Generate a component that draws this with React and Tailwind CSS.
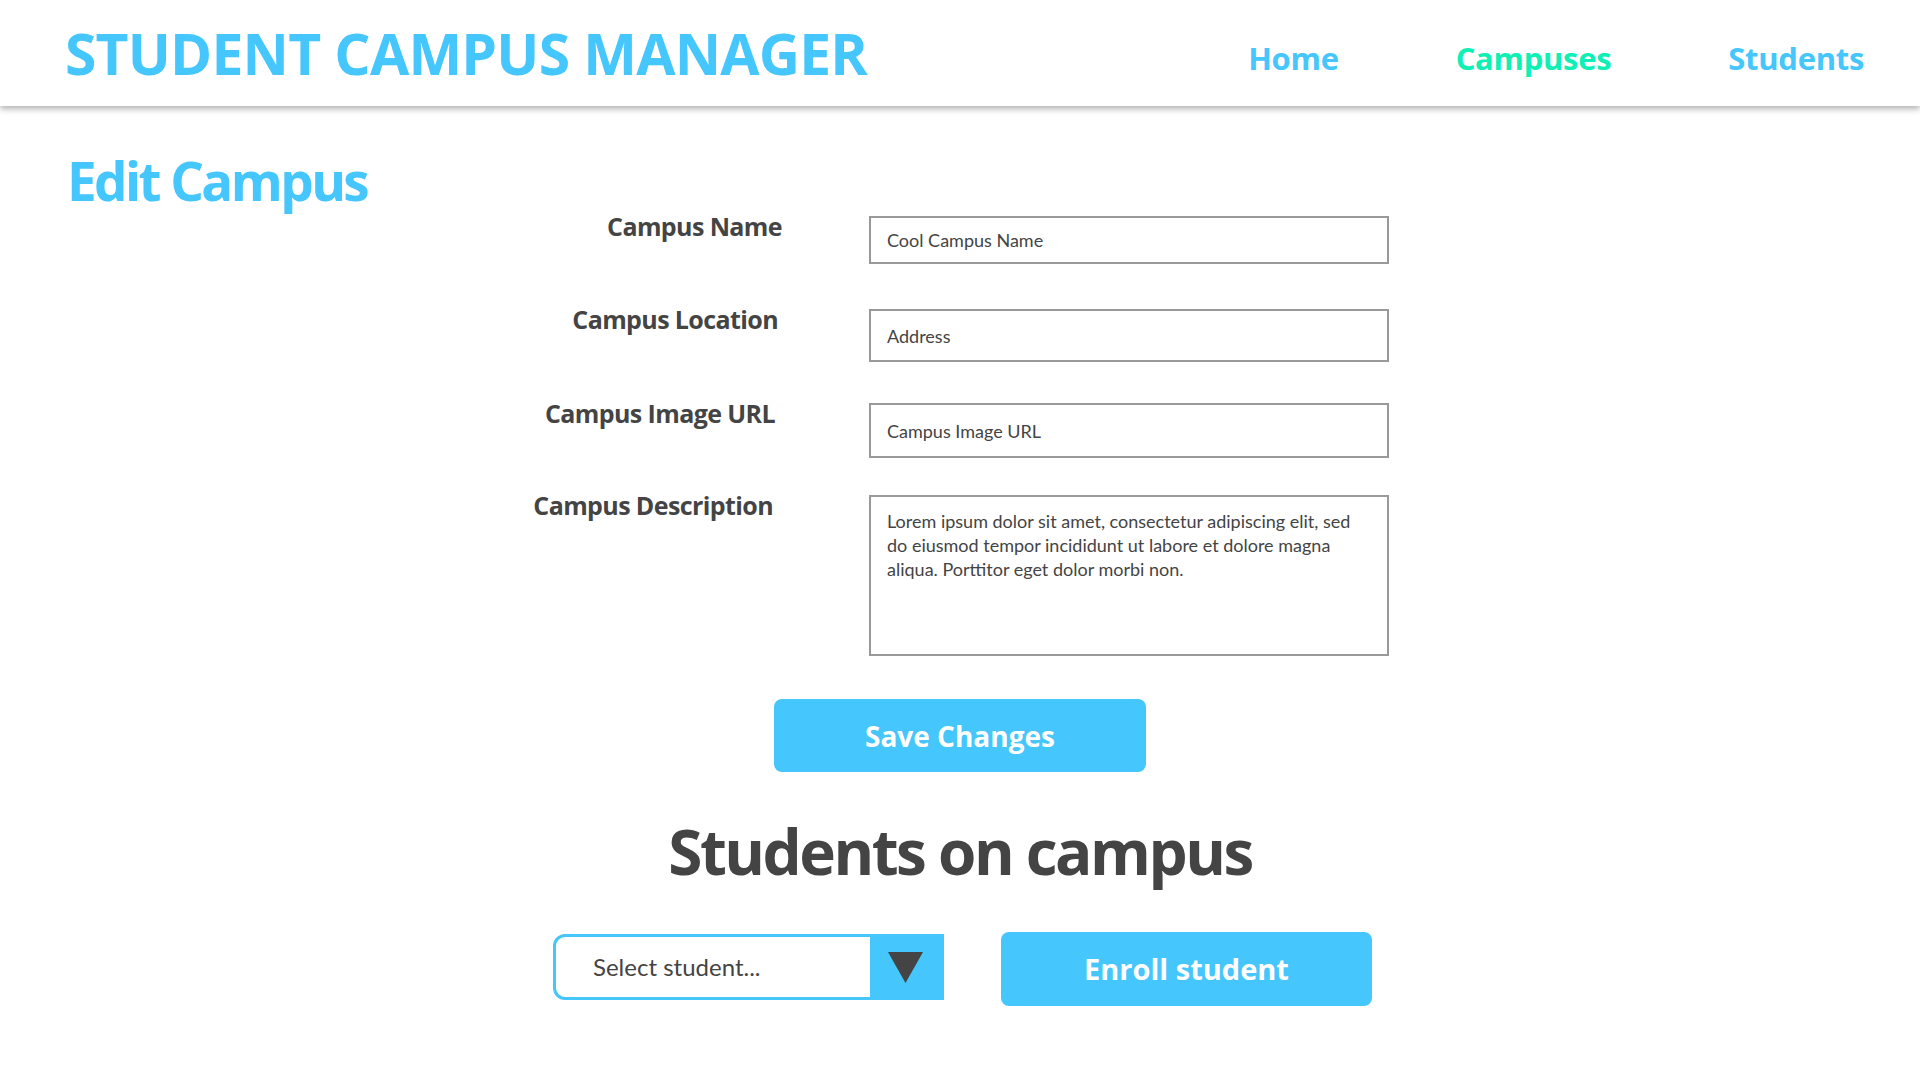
import { useState } from 'react'

const rows = [
  { label: 'Campus Name', placeholder: 'Cool Campus Name', h: 'h-[48px]', mt: 'mt-0', pr: 'pr-0' },
  { label: 'Campus Location', placeholder: 'Address', h: 'h-[53px]', mt: 'mt-[45px]', pr: 'pr-[4px]' },
  { label: 'Campus Image URL', placeholder: 'Campus Image URL', h: 'h-[55px]', mt: 'mt-[41px]', pr: 'pr-[7px]' },
]

function Header() {
  return (
    <header className="relative z-10 h-[106px] bg-white flex items-center justify-between pl-[65px] pr-[56px] shadow-[0_3px_6px_rgba(0,0,0,0.3)]">
      <h1 className="text-[57px] leading-none font-bold text-[#45c6fc] tracking-[-0.8px]">STUDENT CAMPUS MANAGER</h1>
      <nav className="flex items-center gap-[117px] text-[31px] font-bold leading-none pt-[10px] tracking-[-0.3px]">
        <a className="text-[#45c6fc]">Home</a>
        <a className="text-[#0ff0b4]">Campuses</a>
        <a className="text-[#45c6fc]">Students</a>
      </nav>
    </header>
  )
}

function App() {
  const [desc, setDesc] = useState(
    'Lorem ipsum dolor sit amet, consectetur adipiscing elit, sed do eiusmod tempor incididunt ut labore et dolore magna aliqua. Porttitor eget dolor morbi non.'
  )

  return (
    <div className="min-h-screen bg-white text-[#444444]" style={{ fontFamily: '"Open Sans", sans-serif' }}>
      <Header />

      <main className="pt-[48px]">
        <h2 className="ml-[67px] text-[53px] leading-none font-bold text-[#45c6fc] tracking-[-2.6px]">Edit Campus</h2>

        <form className="mt-[9px]" onSubmit={(e) => e.preventDefault()}>
          <div className="ml-[382px]">
            {rows.map(row => (
              <div key={row.label} className={`flex items-start ${row.mt}`}>
                <label className={`w-[400px] text-right text-[25px] leading-[20px] font-bold tracking-[-0.6px] ${row.pr}`}>{row.label}</label>
                <input
                  type="text"
                  placeholder={row.placeholder}
                  className={`ml-[87px] w-[520px] ${row.h} border-2 border-[#999999] px-[16px] text-[18px] text-[#444444] placeholder:text-[#444444] outline-none`}
                  style={{ fontFamily: '"Lato", sans-serif' }}
                />
              </div>
            ))}
            <div className="flex items-start mt-[37px]">
              <label className="w-[400px] text-right text-[25px] leading-[20px] font-bold tracking-[-0.6px] pr-[9px]">Campus Description</label>
              <textarea
                value={desc}
                onChange={(e) => setDesc(e.target.value)}
                className="ml-[87px] w-[520px] h-[161px] border-2 border-[#999999] px-[16px] pt-[12px] text-[18px] leading-[24px] text-[#444444] resize-none outline-none"
                style={{ fontFamily: '"Lato", sans-serif' }}
              />
            </div>
          </div>

          <div className="flex justify-center mt-[43px]">
            <button className="w-[372px] h-[73px] rounded-[8px] bg-[#45c6fc] text-white text-[28px] font-bold tracking-[0px]">Save Changes</button>
          </div>
        </form>

        <h2 className="mt-[48px] text-center text-[62px] leading-none font-bold tracking-[-2.5px]">Students on campus</h2>

        <div className="mt-[50px] flex justify-center items-start gap-[57px] pl-[5px]">
          <div className="flex w-[391px] h-[66px] mt-[2px] border-[3px] border-[#45c6fc] rounded-l-[12px] overflow-hidden">
            <div className="flex-1 flex items-center pl-[37px] text-[24px] text-[#444444]" style={{ fontFamily: '"Lato", sans-serif' }}>Select student...</div>
            <div className="w-[71px] bg-[#45c6fc] flex items-center justify-center">
              <svg width="35" height="31" viewBox="0 0 35 31">
                <polygon points="0,0 35,0 17.5,31" fill="#444444" />
              </svg>
            </div>
          </div>
          <button className="w-[371px] h-[74px] rounded-[8px] bg-[#45c6fc] text-white text-[29px] font-bold tracking-[0px]">Enroll student</button>
        </div>
      </main>
    </div>
  )
}

export default App
